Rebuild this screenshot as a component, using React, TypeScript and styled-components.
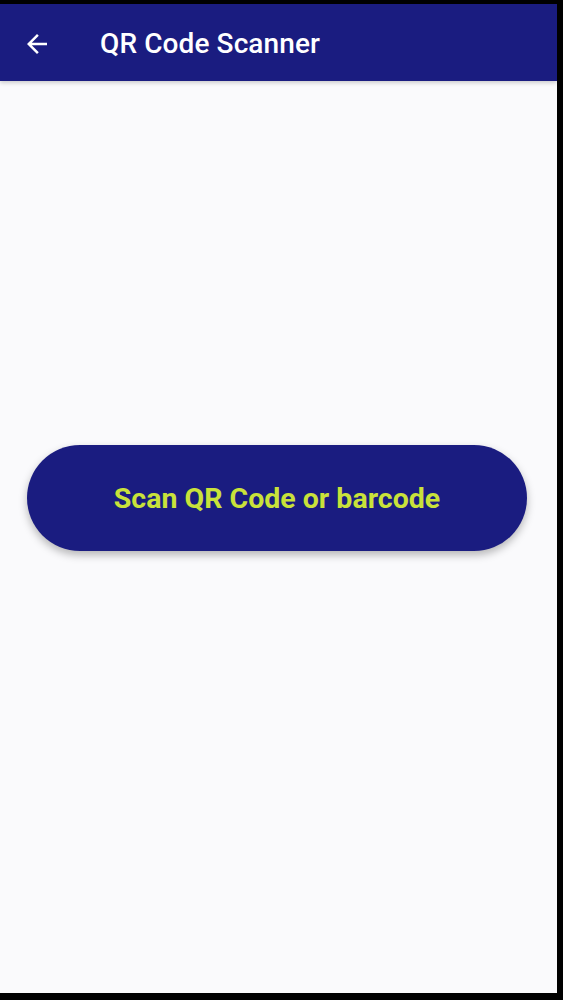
import React from "react";
import styled, {createGlobalStyle} from "styled-components";

const GlobalStyle = createGlobalStyle`
  html, body {
    margin: 0;
    padding: 0;
    background: #000;
  }
  body {
    font-family: Roboto, "Noto Sans", sans-serif;
  }
`

export default function App() {
	return (
		<>
			<GlobalStyle/>
			<Frame>
				<Screen>
					<TopBar>
						<BackButton aria-label="back">
							<svg width="30" height="30" viewBox="0 0 24 24">
								<path d="M20 11H7.83l5.59-5.59L12 4l-8 8 8 8 1.41-1.41L7.83 13H20v-2z" fill="#fff"/>
							</svg>
						</BackButton>
						<Title>QR Code Scanner</Title>
					</TopBar>
					<Content>
						<ScanButton>Scan QR Code or barcode</ScanButton>
					</Content>
				</Screen>
			</Frame>
		</>
	)
}

const Frame = styled.div`
  width: 563px;
  height: 1000px;
  padding: 4px 6px 7px 0;
  box-sizing: border-box;
  background: #000;
`
const Screen = styled.div`
  height: 100%;
  display: flex;
  flex-direction: column;
  background: #fafafc;
`
const TopBar = styled.header`
  height: 77px;
  flex-shrink: 0;
  display: flex;
  align-items: center;
  padding-top: 2px;
  box-sizing: border-box;
  background: #1a1c80;
  box-shadow: 0 2px 4px rgba(0, 0, 0, 0.18);
  position: relative;
  z-index: 1;
`
const BackButton = styled.button`
  width: 30px;
  height: 30px;
  margin-left: 22px;
  padding: 0;
  border: none;
  background: none;
  display: flex;
  align-items: center;
  justify-content: center;
`
const Title = styled.h1`
  margin: 0 0 0 48px;
  color: #fff;
  font-size: 28px;
  font-weight: 500;
  letter-spacing: 0.1px;
`
const Content = styled.main`
  flex: 1;
  display: flex;
  align-items: flex-start;
  justify-content: center;
  padding-top: 364px;
  padding-right: 3px;
`
const ScanButton = styled.button`
  width: 500px;
  height: 106px;
  border: none;
  border-radius: 53px;
  background: #1a1c80;
  color: #c9e23a;
  font-family: Roboto, "Noto Sans", sans-serif;
  font-size: 28.5px;
  font-weight: 700;
  box-shadow: 0 4px 8px rgba(0, 0, 0, 0.28);
`
